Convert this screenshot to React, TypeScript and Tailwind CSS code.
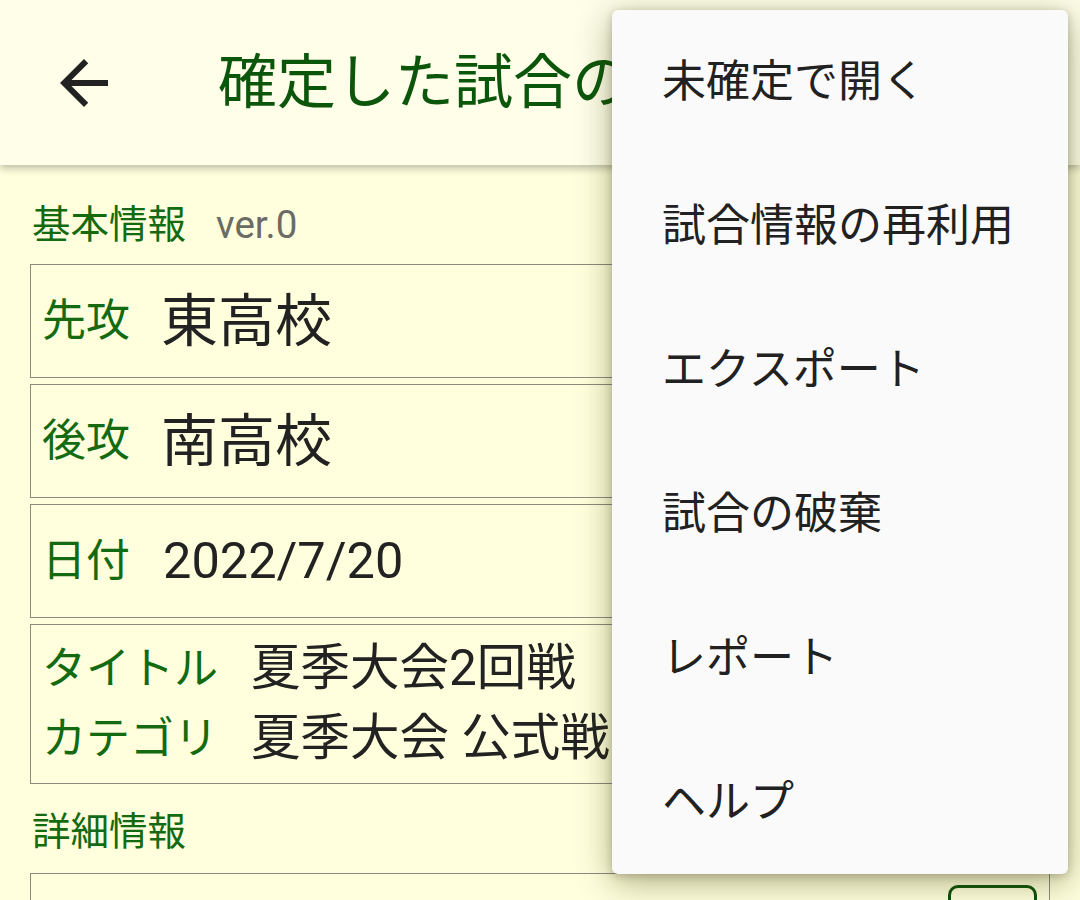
import React from "react";

const FONT = { fontFamily: '"Roboto", "Noto Sans CJK JP", sans-serif' };

function Box({ children, tall }: { children: React.ReactNode; tall?: boolean }) {
  return (
    <div
      className={`border border-[#8a8a80] mb-[6px] pl-[11px] flex ${
        tall ? "h-[160px] flex-col justify-center" : "h-[114px] items-center"
      }`}
    >
      {children}
    </div>
  );
}

const menuItems = ["未確定で開く", "試合情報の再利用", "エクスポート", "試合の破棄", "レポート", "ヘルプ"];

export default function App() {
  return (
    <div className="relative w-[1080px] h-[900px] overflow-hidden bg-[#ffffdd]" style={FONT}>
      {/* Header */}
      <div className="relative z-10 h-[165px] bg-[#fefee9] flex items-center shadow-[0_3px_8px_rgba(0,0,0,0.28)]">
        <div className="w-[72px] h-[72px] ml-[48px] flex items-center justify-center">
          <svg viewBox="0 0 24 24" width="72" height="72" fill="#222">
            <path d="M20 11H7.83l5.59-5.59L12 4l-8 8 8 8 1.41-1.41L7.83 13H20v-2z" />
          </svg>
        </div>
        <div className="ml-[98px] w-[394px] overflow-hidden">
          <div className="text-[59px] leading-[72px] text-[#0c560c] whitespace-nowrap">確定した試合の一覧</div>
        </div>
      </div>

      {/* Content */}
      <div className="px-[30px]">
        <div className="mt-[35px] mb-[14px] h-[50px] flex items-center">
          <span className="text-[38.5px] text-[#136a10] pl-[2px]">基本情報</span>
          <span className="ml-[30px] text-[38.5px] text-[#6b6b66]">ver.0</span>
        </div>

        <Box>
          <span className="text-[44px] text-[#136a10] leading-none">先攻</span>
          <span className="ml-[31px] text-[57px] text-[#222] leading-none">東高校</span>
        </Box>
        <Box>
          <span className="text-[44px] text-[#136a10] leading-none">後攻</span>
          <span className="ml-[31px] text-[57px] text-[#222] leading-none">南高校</span>
        </Box>
        <Box>
          <span className="text-[44px] text-[#136a10] leading-none">日付</span>
          <span className="ml-[33px] text-[50.5px] text-[#222] leading-none">2022/7/20</span>
        </Box>
        <Box tall>
          <div className="flex items-center h-[70px] whitespace-nowrap">
            <span className="w-[209px] text-[44px] text-[#136a10] leading-none">タイトル</span>
            <span className="text-[49.5px] text-[#222] leading-none">夏季大会2回戦</span>
          </div>
          <div className="flex items-center h-[70px] whitespace-nowrap">
            <span className="w-[209px] text-[44px] text-[#136a10] leading-none">カテゴリ</span>
            <span className="text-[49.5px] text-[#222] leading-none">夏季大会 公式戦</span>
          </div>
        </Box>

        <div className="mt-[23px] mb-[16px] h-[50px] flex items-center">
          <span className="text-[38.5px] text-[#136a10] pl-[2px]">詳細情報</span>
        </div>

        <div className="border border-[#8a8a80] h-[200px] flex justify-end pr-[12px] pt-[11px]">
          <div className="w-[89px] h-[80px] rounded-[10px] border-[3px] border-[#0c520c]" />
        </div>
      </div>

      {/* Popup menu */}
      <div className="absolute z-20 left-[612px] top-[10px] w-[456px] h-[864px] bg-[#fafafa] rounded-[6px] shadow-[0_8px_34px_rgba(60,60,0,0.42),0_2px_8px_rgba(0,0,0,0.2)] flex flex-col">
        {menuItems.map((m) => (
          <div key={m} className="h-[144px] flex items-center pl-[50px] text-[44px] text-[#212121] leading-none whitespace-nowrap">
            {m}
          </div>
        ))}
      </div>
    </div>
  );
}
